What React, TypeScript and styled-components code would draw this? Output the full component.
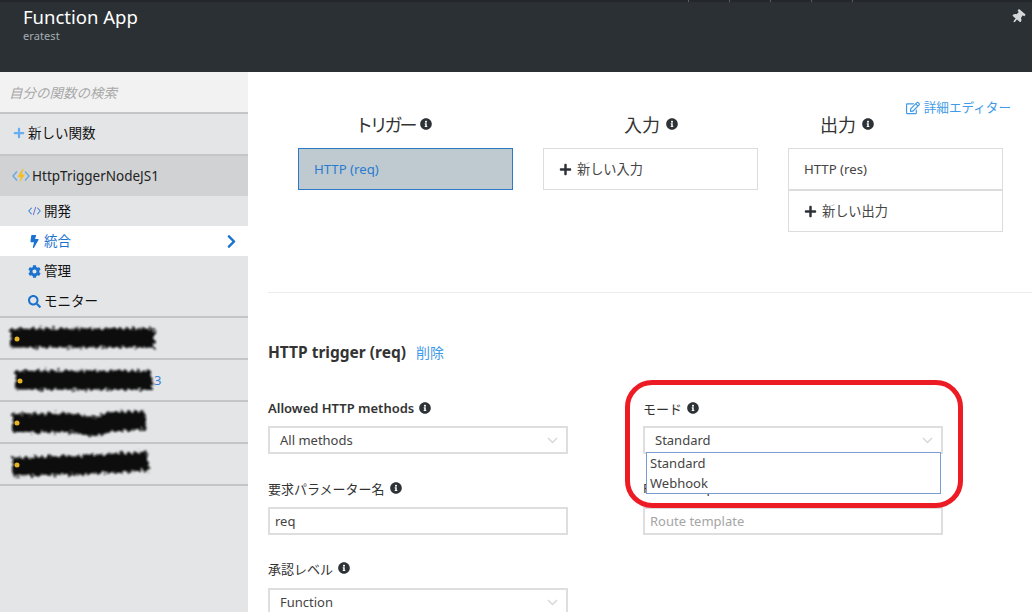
import React from "react";
import styled, { createGlobalStyle } from "styled-components";
import { FaBolt, FaChevronRight, FaCog, FaInfoCircle, FaPlus, FaRegEdit, FaSearch, FaThumbtack } from "react-icons/fa";

const FONT = `"Noto Sans", "Noto Sans CJK JP", sans-serif`;

const Global = createGlobalStyle`
  html, body { margin: 0; padding: 0; width: 1032px; height: 612px; overflow: hidden; background: #fff; }
  body { font-family: ${FONT}; font-size: 13.5px; color: #333; }
  * { box-sizing: border-box; }
`;

const Page = styled.div`position: relative; width: 1032px; height: 612px; overflow: hidden; display: flex; flex-direction: column;`;
const Header = styled.header`height: 72px; flex: none; background: #2b3034; display: flex; flex-direction: column; position: relative;`;
const TopStrip = styled.div`height: 2px; flex: none; background: #23272b; display: flex; gap: 40px; padding-left: 688px;`;
const Tick = styled.span`width: 1px; height: 2px; background: #5a5f63;`;
const HeadText = styled.div`padding: 2px 0 0 23px;`;
const AppTitle = styled.div`font-size: 18.5px; line-height: 26px; color: #fff;`;
const AppSub = styled.div`font-size: 11px; letter-spacing: 0.1px; line-height: 14px; margin-top: -1px; color: #a4acb2;`;
const Pin = styled.span`position: absolute; right: 7px; top: 10px; color: #d4d6d8; font-size: 14px; line-height: 0;
  svg { transform: rotate(40deg); }`;

const Body = styled.div`flex: 1; display: flex; min-height: 0;`;
const Side = styled.nav`width: 248px; flex: none; background: #e4e5e7; display: flex; flex-direction: column;`;
const Search = styled.div`height: 42px; flex: none; background: #f2f2f2; border-bottom: 2px solid #c4c5c7; padding: 0 0 0 9px; display: flex; align-items: center;
  color: #a8a8a8; font-style: italic; font-size: 13.5px;`;
const SideRow = styled.div`height: 42px; flex: none; border-bottom: 2px solid #c4c5c7; display: flex; align-items: center; padding: 0 0 4px 13px; color: #111; font-size: 13.5px; gap: 3px;`;
const PlusMark = styled.span`color: #67aef0; font-size: 12px; line-height: 0; padding-top: 2px;`;
const ActiveFn = styled.div`height: 40px; flex: none; background: #d1d2d4; display: flex; align-items: center; padding-left: 12px; gap: 2px; color: #222; font-size: 13.5px;`;
const Sub = styled.div<{ $on?: boolean }>`height: 30px; flex: none; display: flex; align-items: center; padding: 0 9px 2px 28px; gap: 3px;
  background: ${p => (p.$on ? "#fff" : "transparent")}; color: ${p => (p.$on ? "#1b73cf" : "#111")}; font-size: 13.5px;`;
const SubIcon = styled.span`width: 13px; display: inline-flex; justify-content: center; color: #1b73cf; font-size: 13px; line-height: 0; padding-top: 2px;`;
const Chevron = styled.span`margin-left: auto; color: #1b73cf; font-size: 15px; line-height: 0; padding-top: 2px;`;
const SubGroup = styled.div`border-bottom: 2px solid #c4c5c7; flex: none;`;
const ScribbleRow = styled.div`height: 42px; flex: none; border-bottom: 2px solid #c4c5c7; display: flex; align-items: center; color: #3a83d8; font-size: 13px;`;

const Main = styled.main`flex: 1; min-width: 0; padding-top: 28px; display: flex; flex-direction: column;`;
const EditorLink = styled.div`flex: none; align-self: flex-end; margin: 0 21px -4px 0; height: 16px; display: flex; align-items: center; gap: 4px; color: #3f9be8; font-size: 12.6px; line-height: 16px;
  svg { font-size: 14px; }`;
const Columns = styled.div`flex: none; display: flex; gap: 30px; padding: 0 0 0 50px;`;
const Col = styled.div`width: 215px; display: flex; flex-direction: column;`;
const ColTitle = styled.div<{ $left: number; $tight?: boolean }>`height: 24px; margin-bottom: 12px; padding-left: ${p => p.$left}px; display: flex; align-items: center; gap: 6px; font-size: 18px; color: #333;
  & > b { font-weight: 400; letter-spacing: ${p => (p.$tight ? "-3.2px" : "0")}; }`;
const Slot = styled.div<{ $on?: boolean; $add?: boolean }>`height: 42px; flex: none; display: flex; align-items: center; padding: 0 0 ${p => (p.$add ? "2px" : "0")} 15px;
  border: 1px solid ${p => (p.$on ? "#2b7bc4" : "#dcdcdc")}; background: ${p => (p.$on ? "#bfcad0" : "#fff")};
  color: ${p => (p.$on ? "#2a7bd0" : "#444")}; font-size: 13.2px; gap: 5px;
  & + & { border-top-width: 2px; margin-top: -1px; height: 43px; }`;
const AddIcon = styled.span`color: #2c3136; font-size: 13px; line-height: 0; padding-top: 2px;`;
const Info = styled.span`color: #2d3236; font-size: 12px; line-height: 0; display: inline-flex;`;
const Rule = styled.hr`flex: none; margin: 60px 0 0 20px; border: 0; height: 1px; background: #ececec;`;
const SectionHead = styled.div`flex: none; margin: 49px 0 0 20px; height: 20px; display: flex; align-items: center; gap: 10px; font-size: 14px;`;
const SectionTitle = styled.span`font-weight: 700; font-size: 15.5px; color: #333;`;
const LinkText = styled.span`color: #3f9be8;`;
const Form = styled.div`flex: none; margin: 37px 0 0 20px; display: grid; grid-template-columns: 300px 300px; column-gap: 75px; align-content: start;`;
const Field = styled.div`height: 80px;`;
const Label = styled.div<{ $bold?: boolean; $gap?: number }>`height: 18px; display: flex; align-items: center; gap: 5px; font-size: 13px; font-weight: ${p => (p.$bold ? 600 : 400)}; color: #333; margin-bottom: ${p => p.$gap ?? 9}px;`;
const Control = styled.div<{ $ph?: boolean; $select?: boolean }>`height: 28px; border: 2px solid #dedede; background: #fff; display: flex; align-items: center; justify-content: space-between;
  padding: 0 8px 0 ${p => (p.$select ? "10px" : "5px")}; font-size: 13px; color: ${p => (p.$ph ? "#a5a5a5" : "#444")};`;
const Arrow = styled.svg`width: 11px; height: 7px; fill: none; stroke: #d8d8d8; stroke-width: 1.5;`;
const Drop = styled.div`position: absolute; left: 646px; top: 452px; width: 295px; height: 42px; border: 1px solid #7b9bd3; background: #fff; padding: 0 0 0 3px; font-size: 13px; line-height: 20px; color: #444;`;
const Mark = styled.div`position: absolute; left: 625px; top: 380px; width: 338px; height: 128px; border: 5px solid #ed1c24; border-radius: 27px; pointer-events: none;`;
const Scribble = styled.svg<{ $x: number }>`display: block; flex: none; overflow: visible; margin-left: ${p => p.$x}px;`;

const FnIcon = () => (
  <svg width="18" height="16" viewBox="0 0 18 16">
    <path d="M5 3.5 1 8l4 4.5M13 3.5 17 8l-4 4.5" fill="none" stroke="#6aa9de" strokeWidth="1.4" />
    <path d="M10.5 1 5.7 9H9l-1.7 6L13 6.6H9.7L11.6 1z" fill="#f5bd1f" />
  </svg>
);
const CodeIcon = () => (
  <svg width="16" height="12" viewBox="0 0 16 12">
    <path d="M4.5 2 1 6l3.5 4M11.5 2 15 6l-3.5 4" fill="none" stroke="#3a83d8" strokeWidth="1.3" />
    <path d="M9.5 1 6.5 11" stroke="#6b5fc0" strokeWidth="1.1" />
  </svg>
);
const Down = () => <Arrow viewBox="0 0 11 7"><path d="M1 1 5.5 5.5 10 1" /></Arrow>;

const Blob = ({ id, w, x, d, dot }: { id: string; w: number; x: number; d: string; dot: number }) => (
  <Scribble $x={x} width={w} height={40} viewBox={`0 0 ${w} 40`}>
    <defs>
      <filter id={id} filterUnits="userSpaceOnUse" x={-8} y={-4} width={w + 16} height={48}>
        <feTurbulence type="fractalNoise" baseFrequency="0.3" numOctaves="2" seed="4" />
        <feDisplacementMap in="SourceGraphic" scale="8" />
        <feGaussianBlur stdDeviation="0.8" />
      </filter>
    </defs>
    <path d={d} fill="none" stroke="#0a0a0a" strokeWidth="19" filter={`url(#${id})`} />
    <circle cx={dot} cy="21" r="2.5" fill="#e6b422" />
  </Scribble>
);

export default function App() {
  return (
    <Page>
      <Global />
      <Header>
        <TopStrip>{[0, 1, 2, 3, 4].map(i => <Tick key={i} />)}</TopStrip>
        <HeadText>
          <AppTitle>Function App</AppTitle>
          <AppSub>eratest</AppSub>
        </HeadText>
        <Pin><FaThumbtack /></Pin>
      </Header>
      <Body>
        <Side>
          <Search>自分の関数の検索</Search>
          <SideRow><PlusMark><FaPlus /></PlusMark>新しい関数</SideRow>
          <ActiveFn><FnIcon />HttpTriggerNodeJS1</ActiveFn>
          <SubGroup>
            <Sub><SubIcon><CodeIcon /></SubIcon>開発</Sub>
            <Sub $on><SubIcon><FaBolt /></SubIcon>統合<Chevron><FaChevronRight /></Chevron></Sub>
            <Sub><SubIcon><FaCog /></SubIcon>管理</Sub>
            <Sub><SubIcon><FaSearch /></SubIcon>モニター</Sub>
          </SubGroup>
          <ScribbleRow><Blob id="s1" w={148} x={9} d="M2 20 L146 20" dot={8} /></ScribbleRow>
          <ScribbleRow><Blob id="s2" w={140} x={14} d="M2 20 L138 20.5" dot={6} />3</ScribbleRow>
          <ScribbleRow><Blob id="s3" w={136} x={11} d="M2 21 L65 21 L82 25 L100 20 L134 18" dot={6} /></ScribbleRow>
          <ScribbleRow><Blob id="s4" w={139} x={11} d="M2 23 L70 21 L137 17" dot={6} /></ScribbleRow>
        </Side>
        <Main>
          <EditorLink><FaRegEdit />詳細エディター</EditorLink>
          <Columns>
            <Col>
              <ColTitle $left={57} $tight><b>トリガー</b><Info><FaInfoCircle /></Info></ColTitle>
              <Slot $on>HTTP (req)</Slot>
            </Col>
            <Col>
              <ColTitle $left={81}><b>入力</b><Info><FaInfoCircle /></Info></ColTitle>
              <Slot $add><AddIcon><FaPlus /></AddIcon>新しい入力</Slot>
            </Col>
            <Col>
              <ColTitle $left={32}><b>出力</b><Info><FaInfoCircle /></Info></ColTitle>
              <Slot>HTTP (res)</Slot>
              <Slot $add><AddIcon><FaPlus /></AddIcon>新しい出力</Slot>
            </Col>
          </Columns>
          <Rule />
          <SectionHead><SectionTitle>HTTP trigger (req)</SectionTitle><LinkText>削除</LinkText></SectionHead>
          <Form>
            <Field>
              <Label $bold>Allowed HTTP methods<Info><FaInfoCircle /></Info></Label>
              <Control $select>All methods<Down /></Control>
            </Field>
            <Field>
              <Label>モード<Info><FaInfoCircle /></Info></Label>
              <Control $select>Standard<Down /></Control>
            </Field>
            <Field>
              <Label $gap={10}>要求パラメーター名<Info><FaInfoCircle /></Info></Label>
              <Control>req</Control>
            </Field>
            <Field>
              <Label $gap={10}>Route template<Info><FaInfoCircle /></Info></Label>
              <Control $ph>Route template</Control>
            </Field>
            <Field>
              <Label $gap={11}>承認レベル<Info><FaInfoCircle /></Info></Label>
              <Control $select>Function<Down /></Control>
            </Field>
          </Form>
        </Main>
      </Body>
      <Drop><div>Standard</div><div>Webhook</div></Drop>
      <Mark />
    </Page>
  );
}
